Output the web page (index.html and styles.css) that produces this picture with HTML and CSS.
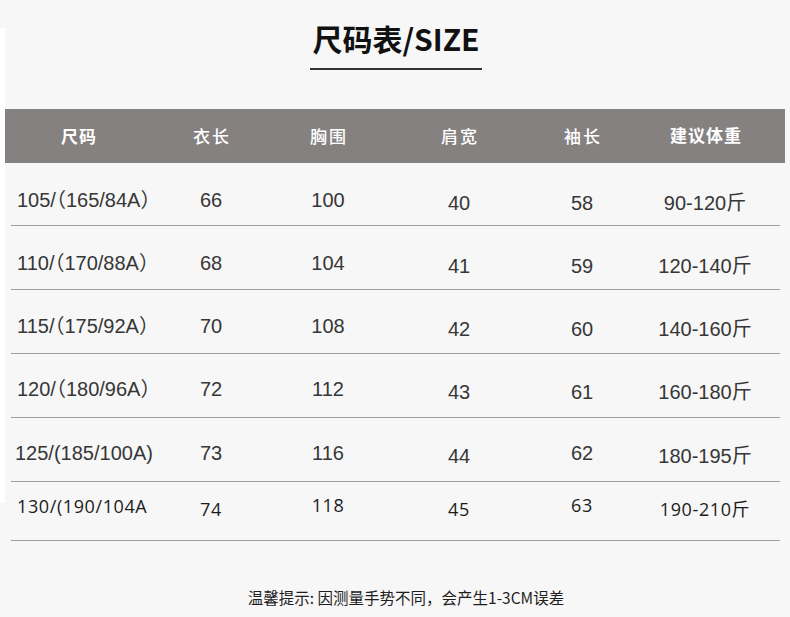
FILE: index.html
```html
<!DOCTYPE html>
<html lang="zh-CN">
<head>
<meta charset="utf-8">
<title>尺码表/SIZE</title>
<link rel="stylesheet" href="styles.css">
</head>
<body>
<div class="page">
  <header class="title-wrap">
    <h1 class="title">尺码表/SIZE</h1>
    <div class="title-rule"></div>
  </header>

  <section class="table">
    <div class="thead">
      <span class="th bold">尺码</span>
      <span class="th">衣长</span>
      <span class="th">胸围</span>
      <span class="th">肩宽</span>
      <span class="th">袖长</span>
      <span class="th bold wide">建议体重</span>
    </div>

    <div class="row r1">
      <span class="c1">105/（165/84A）</span>
      <span>66</span>
      <span>100</span>
      <span class="dn">40</span>
      <span class="dn">58</span>
      <span class="dn">90-120斤</span>
    </div>
    <div class="row r2">
      <span class="c1">110/（170/88A）</span>
      <span>68</span>
      <span>104</span>
      <span class="dn">41</span>
      <span class="dn">59</span>
      <span class="dn">120-140斤</span>
    </div>
    <div class="row r3">
      <span class="c1">115/（175/92A）</span>
      <span>70</span>
      <span>108</span>
      <span class="dn">42</span>
      <span class="dn">60</span>
      <span class="dn">140-160斤</span>
    </div>
    <div class="row r4">
      <span class="c1">120/（180/96A）</span>
      <span>72</span>
      <span>112</span>
      <span class="dn">43</span>
      <span class="dn">61</span>
      <span class="dn">160-180斤</span>
    </div>
    <div class="row r5">
      <span class="c1 shift">125/(185/100A)</span>
      <span>73</span>
      <span>116</span>
      <span class="dn">44</span>
      <span>62</span>
      <span class="dn">180-195斤</span>
    </div>
    <div class="row r6">
      <span class="c1">130/(190/104A</span>
      <span class="dn">74</span>
      <span class="up">118</span>
      <span class="dn">45</span>
      <span class="up">63</span>
      <span class="dn">190-210斤</span>
    </div>
  </section>

  <p class="note">温馨提示: 因测量手势不同，会产生1-3CM误差</p>
</div>
</body>
</html>
```

FILE: styles.css
```css
* {
  box-sizing: border-box;
}

html, body {
  margin: 0;
  padding: 0;
}

body {
  width: 790px;
  height: 617px;
  overflow: hidden;
  background: linear-gradient(#ffffff, #ffffff) 0 28px / 5px 475px no-repeat, #f7f7f7;
  font-family: "Liberation Sans", "Noto Sans CJK SC", sans-serif;
  color: #363636;
}

.page {
  display: flex;
  flex-direction: column;
}

/* ---------- title ---------- */
.title-wrap {
  display: flex;
  flex-direction: column;
  align-items: center;
  padding-top: 18px;
  padding-left: 2px;
}

.title {
  margin: 0;
  font-family: "Noto Sans CJK SC", sans-serif;
  font-weight: 700;
  font-size: 30px;
  line-height: 40px;
  letter-spacing: 0;
  color: #111;
}

.title-rule {
  width: 172px;
  height: 2px;
  margin-top: 10px;
  background: #333;
}

/* ---------- table ---------- */
.table {
  margin-top: 39px;
  display: flex;
  flex-direction: column;
}

.thead {
  margin-left: 5px;
  width: 780px;
  height: 54px;
  background: #868181;
  display: grid;
  grid-template-columns: 146px 120px 114px 148px 98px 148px;
  align-items: center;
}

.th {
  text-align: center;
  color: #fff;
  font-family: "Noto Sans CJK SC", sans-serif;
  font-size: 17px;
  font-weight: 500;
  letter-spacing: 2px;
  line-height: 20px;
  padding-left: 2px;
}

.th.bold {
  font-weight: 700;
  letter-spacing: 1px;
}

.th.wide {
  padding-bottom: 2px;
}

.row {
  --p: 27px;
  margin: 0 10px 0 11px;
  display: grid;
  grid-template-columns: 140px 120px 114px 148px 98px 148px;
  align-items: start;
  border-bottom: 1px solid #9d9d9d;
  font-size: 20px;
  line-height: 20px;
  color: #363636;
}

.row > span {
  text-align: center;
  padding-top: var(--p);
  white-space: nowrap;
}

.row > span.dn {
  padding-top: calc(var(--p) + 3px);
}

.row > span.up {
  padding-top: calc(var(--p) - 1px);
}

.row > span.c1 {
  text-align: left;
  padding-left: 6px;
  font-feature-settings: "halt";
}

.row > span.c1.shift {
  padding-left: 4px;
}

.r1 { height: 63px; --p: 27px; }
.r2 { height: 64px; --p: 27px; }
.r3 { height: 64px; --p: 26px; }
.r4 { height: 64px; --p: 25px; }
.r5 { height: 64px; --p: 25px; }
.r6 {
  height: 59px;
  --p: 14px;
  font-family: "Open Sans", "Noto Sans CJK SC", sans-serif;
  font-size: 18px;
  letter-spacing: 0.6px;
  color: #1c1c1c;
}

/* ---------- note ---------- */
.note {
  margin: 0;
  padding-top: 46px;
  padding-left: 22px;
  text-align: center;
  font-family: "Noto Sans CJK SC", sans-serif;
  font-size: 15.5px;
  line-height: 20px;
  color: #1e1e1e;
}
```
